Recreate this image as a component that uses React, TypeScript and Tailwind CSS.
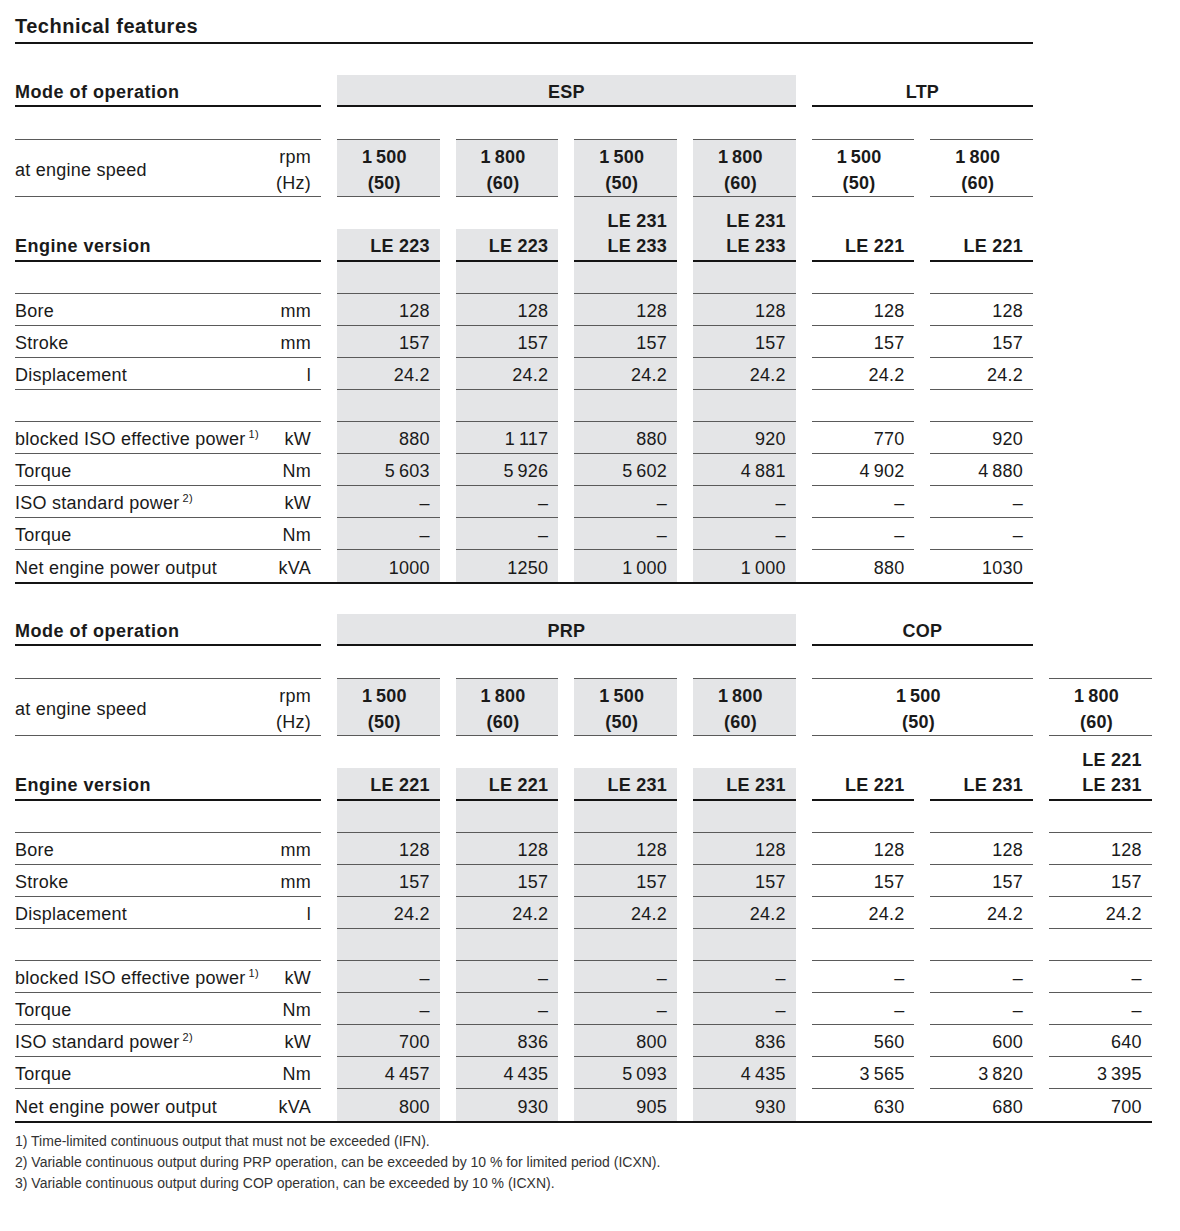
import React from 'react';

const GRAY = 'bg-[#e4e5e7]';
const THIN = 'border-[#5a5a5a]';
const THICK = 'border-[#141414]';

type Mode = { label: string; span: number; gray: boolean };
type Speed = { rpm: string; hz: string; span: number; gray: boolean };
type Row = { label: string; sup?: string; unit: string; values: string[] } | null;

const spanClass: Record<number, string> = {
  1: 'col-span-1',
  2: 'col-span-2',
  4: 'col-span-4',
};

// thin space between thousands, as in the print layout
const t = (s: string) => s.replace(' ', '\u2009');

function SpecTable({
  cols,
  modes,
  speeds,
  engines,
  rows,
}: {
  cols: number;
  modes: Mode[];
  speeds: Speed[];
  engines: string[][];
  rows: Row[];
}) {
  const gray = (i: number) => i < 4;
  const grid = cols === 6 ? 'grid-cols-[306px_repeat(6,102.7px)]' : 'grid-cols-[306px_repeat(7,102.7px)]';

  return (
    <div className={`grid ${grid} gap-x-4 text-[18px] tracking-[0.25px] text-[#1a1a1a]`}>
      {/* Mode of operation */}
      <div className={`h-[32px] flex items-center pt-[4px] border-b-2 ${THICK} font-bold tracking-[0.5px]`}>
        Mode of operation
      </div>
      {modes.map((m) => (
        <div
          key={m.label}
          className={`${spanClass[m.span]} h-[32px] flex items-center justify-center pt-[4px] border-b-2 ${THICK} font-bold ${
            m.gray ? GRAY : ''
          }`}
        >
          {m.label}
        </div>
      ))}
      <div className="col-span-full h-[32px]" />

      {/* Engine speed */}
      <div className={`flex items-center justify-between border-y ${THIN}`}>
        <span className="pt-[4px]">at engine speed</span>
        <div className="text-right pr-[10px] leading-[26px] pt-[4px]">
          <div>rpm</div>
          <div>(Hz)</div>
        </div>
      </div>
      {speeds.map((s, i) => (
        <div
          key={i}
          className={`${spanClass[s.span]} border-y ${THIN} pt-[4px] pr-[8px] text-center leading-[26px] font-bold ${
            s.gray ? GRAY : ''
          }`}
        >
          <div>{t(s.rpm)}</div>
          <div>{s.hz}</div>
        </div>
      ))}

      {/* Engine version */}
      <div className={`h-[65px] flex items-end border-b-2 ${THICK} font-bold tracking-[0.5px] leading-[25px] pb-[1px]`}>
        Engine version
      </div>
      {engines.map((lines, i) => (
        <div key={i} className={`h-[65px] flex flex-col justify-end border-b-2 ${THICK}`}>
          <div
            className={`text-right pr-[10px] leading-[25px] font-bold pb-[1px] ${
              lines.length > 1 ? 'pt-[12px]' : 'pt-[5px]'
            } ${gray(i) ? GRAY : ''}`}
          >
            {lines.map((l) => (
              <div key={l}>{l}</div>
            ))}
          </div>
        </div>
      ))}

      {/* Data rows */}
      {rows.map((r, ri) => {
        const last = ri === rows.length - 1;
        const border = last ? '' : `border-b ${THIN}`;
        if (!r) {
          return (
            <React.Fragment key={ri}>
              <div className={`h-[32px] ${border}`} />
              {Array.from({ length: cols }).map((_, i) => (
                <div key={i} className={`h-[32px] ${border} ${gray(i) ? GRAY : ''}`} />
              ))}
            </React.Fragment>
          );
        }
        return (
          <React.Fragment key={ri}>
            <div className={`h-[32px] flex items-center justify-between pt-[4px] ${border}`}>
              <span>
                {r.label}
                {r.sup && <sup className="text-[11px] ml-[3px] top-[-0.6em]">{r.sup}</sup>}
              </span>
              <span className="pr-[10px]">{r.unit}</span>
            </div>
            {r.values.map((v, i) => (
              <div
                key={i}
                className={`h-[32px] flex items-center justify-end pt-[4px] pr-[10px] ${border} ${gray(i) ? GRAY : ''}`}
              >
                {t(v)}
              </div>
            ))}
          </React.Fragment>
        );
      })}
      <div className="col-span-full h-[2px] bg-[#141414]" />
    </div>
  );
}

const dash6 = ['–', '–', '–', '–', '–', '–'];
const dash7 = ['–', '–', '–', '–', '–', '–', '–'];

export default function App() {
  return (
    <div className="min-h-screen bg-white px-[15px] font-['Liberation_Sans',Arial,sans-serif]">
      <div className={`w-[1018px] pt-[12px] pb-[2px] leading-[28px] border-b-2 ${THICK} text-[20px] font-bold tracking-[0.5px] text-[#1a1a1a]`}>
        Technical features
      </div>

      <div className="mt-[31px]">
        <SpecTable
          cols={6}
          modes={[
            { label: 'ESP', span: 4, gray: true },
            { label: 'LTP', span: 2, gray: false },
          ]}
          speeds={[
            { rpm: '1 500', hz: '(50)', span: 1, gray: true },
            { rpm: '1 800', hz: '(60)', span: 1, gray: true },
            { rpm: '1 500', hz: '(50)', span: 1, gray: true },
            { rpm: '1 800', hz: '(60)', span: 1, gray: true },
            { rpm: '1 500', hz: '(50)', span: 1, gray: false },
            { rpm: '1 800', hz: '(60)', span: 1, gray: false },
          ]}
          engines={[['LE 223'], ['LE 223'], ['LE 231', 'LE 233'], ['LE 231', 'LE 233'], ['LE 221'], ['LE 221']]}
          rows={[
            null,
            { label: 'Bore', unit: 'mm', values: ['128', '128', '128', '128', '128', '128'] },
            { label: 'Stroke', unit: 'mm', values: ['157', '157', '157', '157', '157', '157'] },
            { label: 'Displacement', unit: 'l', values: ['24.2', '24.2', '24.2', '24.2', '24.2', '24.2'] },
            null,
            { label: 'blocked ISO effective power', sup: '1)', unit: 'kW', values: ['880', '1 117', '880', '920', '770', '920'] },
            { label: 'Torque', unit: 'Nm', values: ['5 603', '5 926', '5 602', '4 881', '4 902', '4 880'] },
            { label: 'ISO standard power', sup: '2)', unit: 'kW', values: dash6 },
            { label: 'Torque', unit: 'Nm', values: dash6 },
            { label: 'Net engine power output', unit: 'kVA', values: ['1000', '1250', '1 000', '1 000', '880', '1030'] },
          ]}
        />
      </div>

      <div className="mt-[30px]">
        <SpecTable
          cols={7}
          modes={[
            { label: 'PRP', span: 4, gray: true },
            { label: 'COP', span: 2, gray: false },
          ]}
          speeds={[
            { rpm: '1 500', hz: '(50)', span: 1, gray: true },
            { rpm: '1 800', hz: '(60)', span: 1, gray: true },
            { rpm: '1 500', hz: '(50)', span: 1, gray: true },
            { rpm: '1 800', hz: '(60)', span: 1, gray: true },
            { rpm: '1 500', hz: '(50)', span: 2, gray: false },
            { rpm: '1 800', hz: '(60)', span: 1, gray: false },
          ]}
          engines={[['LE 221'], ['LE 221'], ['LE 231'], ['LE 231'], ['LE 221'], ['LE 231'], ['LE 221', 'LE 231']]}
          rows={[
            null,
            { label: 'Bore', unit: 'mm', values: ['128', '128', '128', '128', '128', '128', '128'] },
            { label: 'Stroke', unit: 'mm', values: ['157', '157', '157', '157', '157', '157', '157'] },
            { label: 'Displacement', unit: 'l', values: ['24.2', '24.2', '24.2', '24.2', '24.2', '24.2', '24.2'] },
            null,
            { label: 'blocked ISO effective power', sup: '1)', unit: 'kW', values: dash7 },
            { label: 'Torque', unit: 'Nm', values: dash7 },
            { label: 'ISO standard power', sup: '2)', unit: 'kW', values: ['700', '836', '800', '836', '560', '600', '640'] },
            { label: 'Torque', unit: 'Nm', values: ['4 457', '4 435', '5 093', '4 435', '3 565', '3 820', '3 395'] },
            { label: 'Net engine power output', unit: 'kVA', values: ['800', '930', '905', '930', '630', '680', '700'] },
          ]}
        />
      </div>

      <div className="mt-[8px] text-[14px] leading-[21px] text-[#333]">
        <p>1) Time-limited continuous output that must not be exceeded (IFN).</p>
        <p>2) Variable continuous output during PRP operation, can be exceeded by 10 % for limited period (ICXN).</p>
        <p>3) Variable continuous output during COP operation, can be exceeded by 10 % (ICXN).</p>
      </div>
    </div>
  );
}
